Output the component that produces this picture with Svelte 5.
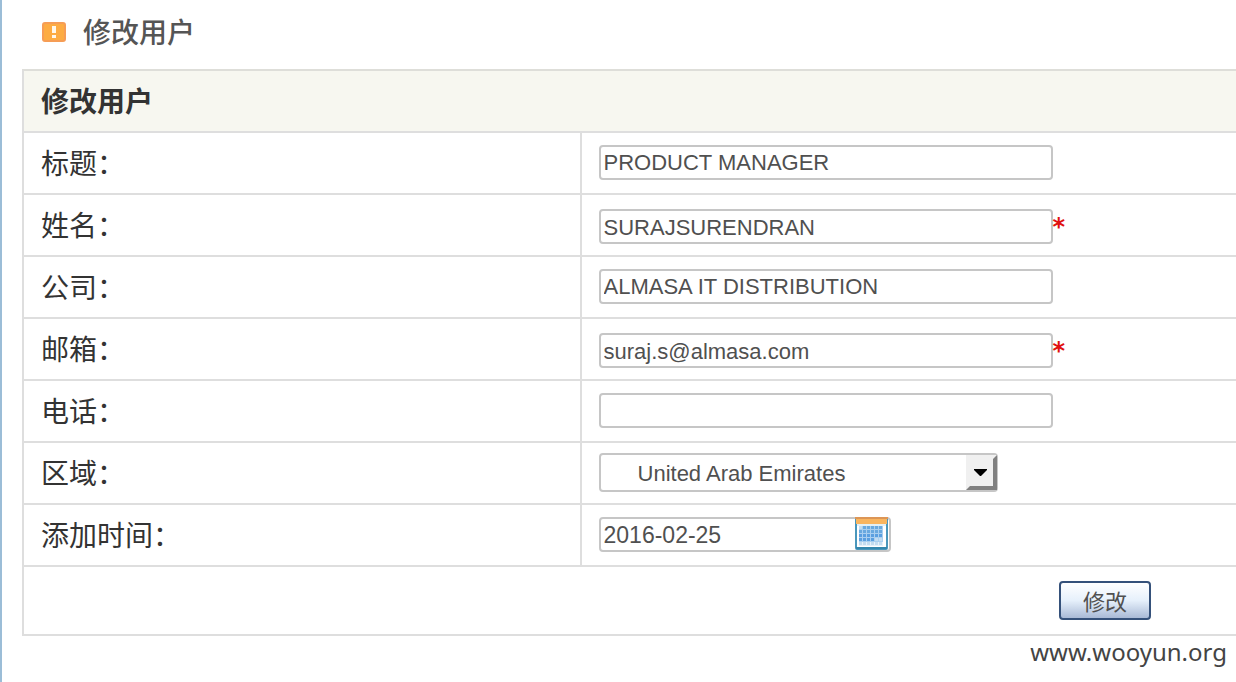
<script>
  let title = $state('PRODUCT MANAGER');
  let name = $state('SURAJSURENDRAN');
  let company = $state('ALMASA IT DISTRIBUTION');
  let email = $state('suraj.s@almasa.com');
  let phone = $state('');
  let region = $state('United Arab Emirates');
  let added = $state('2016-02-25');

  const dots = [0, 1, 2, 3, 4, 5];
  const lines = [0, 1, 2, 3, 4];

  function dotColor(x, y) {
    if (y === 4 || (y === 3 && x > 3) || (x === 0 && y === 0)) return '#c3dcf0';
    return y > 1 ? '#5a9fe0' : '#69a9df';
  }
</script>

<main class="page">
  <h1 class="heading">
    <svg class="alert" viewBox="0 0 24 20" aria-hidden="true">
      <rect x="1" y="1" width="22" height="18" rx="2" fill="#fdac42" stroke="#f69d55" stroke-width="2" />
      <path d="M10 4h4v7h-4zM10 13h4v3h-4z" fill="#fff8ea" />
    </svg>
    <span>修改用户</span>
  </h1>

  <form onsubmit={(e) => e.preventDefault()}>
    <table>
      <thead>
        <tr><th colspan="2">修改用户</th></tr>
      </thead>
      <tbody>
        <tr>
          <td class="label"><label for="title">标题：</label></td>
          <td><div class="field"><input id="title" class="text" type="text" bind:value={title} /></div></td>
        </tr>
        <tr>
          <td class="label"><label for="name">姓名：</label></td>
          <td><div class="field required"><input id="name" class="text" type="text" required bind:value={name} /><span class="star">*</span></div></td>
        </tr>
        <tr>
          <td class="label"><label for="company">公司：</label></td>
          <td><div class="field"><input id="company" class="text" type="text" bind:value={company} /></div></td>
        </tr>
        <tr>
          <td class="label"><label for="email">邮箱：</label></td>
          <td><div class="field required"><input id="email" class="text" type="text" required bind:value={email} /><span class="star">*</span></div></td>
        </tr>
        <tr>
          <td class="label"><label for="phone">电话：</label></td>
          <td><div class="field"><input id="phone" class="text" type="text" bind:value={phone} /></div></td>
        </tr>
        <tr>
          <td class="label"><label for="region">区域：</label></td>
          <td>
            <div class="field">
              <div class="combo">
                <select id="region" bind:value={region}>
                  <option>United Arab Emirates</option>
                </select>
                <svg class="drop" viewBox="0 0 31 35" aria-hidden="true">
                  <path d="M0 0h31v35H0z" fill="#f0f0f0" />
                  <path d="M31 0v35H0l4-4h23V4z" fill="#808080" />
                  <path d="M8 14h13v1l-6 6h-1l-6-6z" fill="#000" />
                </svg>
              </div>
            </div>
          </td>
        </tr>
        <tr>
          <td class="label"><label for="added">添加时间：</label></td>
          <td>
            <div class="field">
              <div class="date">
                <input id="added" type="text" bind:value={added} />
                <svg class="calendar" viewBox="0 0 33 33" aria-hidden="true">
                  <rect x="1" y="1" width="31" height="31" rx="1" fill="#fff" stroke="#4a97bc" stroke-width="2" />
                  <path d="M1 1h31v6H1z" fill="#f9b55f" />
                  <path d="M0 0h33v2H0z" fill="#dc9656" />
                  <path d="M2 7h29v2H2z" fill="#e2f0f7" />
                  <path d="M1 30h31v2H1z" fill="#3487ae" />
                  {#each lines as y}
                    {#each dots as x}
                      <rect x={4 + x * 4} y={9 + y * 4} width="4" height="4" fill={y === 4 ? '#e6f1fa' : '#a9cff0'} />
                      <rect x={4 + x * 4} y={9 + y * 4} width="3" height="3" fill={dotColor(x, y)} />
                    {/each}
                  {/each}
                </svg>
              </div>
            </div>
          </td>
        </tr>
        <tr>
          <td class="actions" colspan="2"><button type="submit">修改</button></td>
        </tr>
      </tbody>
    </table>
  </form>

  <footer>www.wooyun.org</footer>
</main>

<style>
  :global(body) {
    margin: 0;
    background: #fff;
  }

  .page {
    box-sizing: border-box;
    min-height: 100vh;
    padding-left: 20px;
    border-left: 2px solid #9bbdd7;
    font-family: "Liberation Sans", "Noto Sans CJK SC", sans-serif;
    color: #333;
    overflow: hidden;
  }

  .heading {
    display: flex;
    align-items: center;
    gap: 17px;
    margin: 0;
    padding: 12px 20px 17px;
    font-size: 28px;
    line-height: 40px;
    font-weight: 500;
    font-family: "Noto Sans CJK SC", sans-serif;
    color: #555;
  }

  .heading span {
    padding-bottom: 2px;
    line-height: 38px;
  }

  .alert {
    width: 24px;
    height: 20px;
  }

  table {
    width: 100%;
    border-collapse: separate;
    border-spacing: 0;
    border-top: 2px solid #deded9;
    border-left: 2px solid #dedede;
  }

  th,
  td {
    box-sizing: border-box;
    height: 62px;
    padding: 0 17px 2px;
    border-bottom: 2px solid #dedede;
    font-size: 28px;
    line-height: 40px;
    text-align: left;
    vertical-align: middle;
  }

  th {
    background: #f7f7f0;
    font-family: "Noto Sans CJK SC", sans-serif;
    font-weight: 700;
  }

  .label {
    width: 46%;
    border-right: 2px solid #dedede;
    font-family: "Noto Sans CJK SC", sans-serif;
  }

  .field {
    display: flex;
    align-items: center;
    height: 58px;
  }

  .required {
    height: 53px;
    padding-top: 5px;
  }

  input,
  select {
    box-sizing: border-box;
    margin: 0;
    border: 2px solid #c6c6c6;
    border-radius: 4px;
    background: #fff;
    color: #505050;
    font-family: "Liberation Sans", sans-serif;
    font-size: 22px;
    outline: none;
  }

  .text {
    width: 454px;
    height: 35px;
    padding: 2px 3px 0;
  }

  .star {
    color: #e01010;
    font-family: "DejaVu Sans", sans-serif;
    font-size: 24px;
    font-weight: 700;
    line-height: 26px;
  }

  .combo,
  .date {
    position: relative;
  }

  .combo {
    display: flex;
    width: 399px;
  }

  select {
    width: 100%;
    height: 39px;
    padding: 2px 37px 0;
    appearance: none;
  }

  .drop {
    position: absolute;
    top: 2px;
    right: 1px;
    width: 31px;
    height: 35px;
    pointer-events: none;
  }

  .date {
    display: flex;
    width: 292px;
  }

  .date input {
    width: 100%;
    height: 35px;
    padding: 2px 36px 0 3px;
    font-size: 23px;
  }

  .calendar {
    position: absolute;
    top: 0;
    right: 3px;
    width: 33px;
    height: 33px;
  }

  .actions {
    height: 69px;
    padding-right: 85px;
    text-align: right;
  }

  button {
    box-sizing: border-box;
    width: 92px;
    height: 39px;
    padding: 0;
    border: 2px solid #35517a;
    border-radius: 4px;
    background: linear-gradient(#fff, #e6f0fb 50%, #a9bad6);
    color: #505050;
    font-family: "Noto Sans CJK SC", sans-serif;
    font-size: 22px;
    line-height: 35px;
    vertical-align: middle;
  }

  footer {
    padding-right: 9px;
    font-family: "Noto Sans", sans-serif;
    font-size: 24px;
    line-height: 32px;
    text-align: right;
    color: #444;
  }
</style>
